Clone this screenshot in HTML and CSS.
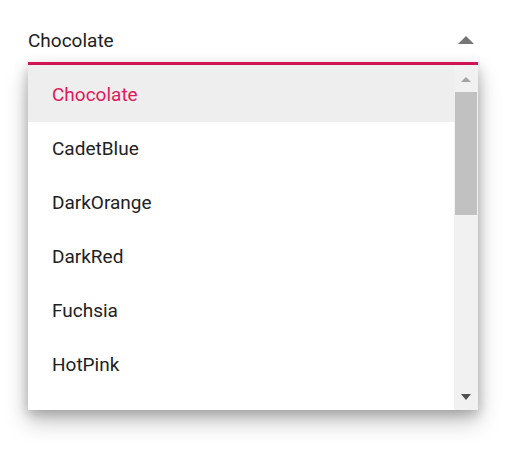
FILE: index.html
```html
<!DOCTYPE html>
<html lang="en">
<head>
<meta charset="UTF-8">
<meta name="viewport" content="width=device-width, initial-scale=1.0">
<title>Dropdown</title>
<link rel="stylesheet" href="styles.css">
</head>
<body>
<div class="dropdown">
    <div class="input">
        <span class="value">Chocolate</span>
        <span class="caret"></span>
    </div>
    <div class="popup">
        <ul class="list">
            <li class="option selected">Chocolate</li>
            <li class="option">CadetBlue</li>
            <li class="option">DarkOrange</li>
            <li class="option">DarkRed</li>
            <li class="option">Fuchsia</li>
            <li class="option">HotPink</li>
        </ul>
        <div class="scrollbar">
            <div class="scroll-btn"><span class="arrow-up"></span></div>
            <div class="thumb"></div>
            <div class="track"></div>
            <div class="scroll-btn"><span class="arrow-down"></span></div>
        </div>
    </div>
</div>
</body>
</html>
```

FILE: styles.css
```css
html, body {
    min-height: 457px;
}
body {
    margin: 0;
    padding: 0 0 47px 0;
    box-sizing: border-box;
    background-color: #fff;
    font-family: Roboto, "Liberation Sans", sans-serif;
}
.dropdown {
    width: 450px;
    margin: 0 0 0 28px;
    padding-top: 19px;
}
.input {
    display: flex;
    align-items: center;
    justify-content: space-between;
    height: 43px;
    padding-right: 4px;
    border-bottom: 3px solid #e3165b;
    font-size: 19px;
    color: #212121;
}
.caret {
    width: 0;
    height: 0;
    border-left: 8.5px solid transparent;
    border-right: 8.5px solid transparent;
    border-bottom: 8px solid #757575;
    margin-bottom: 2px;
}
.popup {
    position: relative;
    display: flex;
    height: 345px;
    background-color: #fff;
    box-shadow: 0 12px 22px rgba(0, 0, 0, 0.22), 0 4px 10px rgba(0, 0, 0, 0.14), 0 2px 14px 2px rgba(0, 0, 0, 0.1);
    overflow: hidden;
}
.list {
    flex: 1;
    margin: 0;
    padding: 0;
    list-style: none;
    overflow: hidden;
}
.option {
    height: 54px;
    line-height: 54px;
    padding-left: 24px;
    font-size: 19px;
    color: #212121;
}
.option:first-child {
    padding-top: 3px;
}
.option.selected {
    background-color: #eee;
    color: #e3165b;
}
.scrollbar {
    display: flex;
    flex-direction: column;
    width: 22px;
    padding: 1px 1px 0 1px;
    background-color: #f1f1f1;
}
.scroll-btn {
    display: flex;
    align-items: center;
    justify-content: center;
    height: 26px;
}
.arrow-up {
    border-left: 5.5px solid transparent;
    border-right: 5.5px solid transparent;
    border-bottom: 5px solid #a3a3a3;
}
.arrow-down {
    border-left: 5.5px solid transparent;
    border-right: 5.5px solid transparent;
    border-top: 6px solid #505050;
}
.thumb {
    height: 123px;
    background-color: #c1c1c1;
}
.track {
    flex: 1;
}
```
